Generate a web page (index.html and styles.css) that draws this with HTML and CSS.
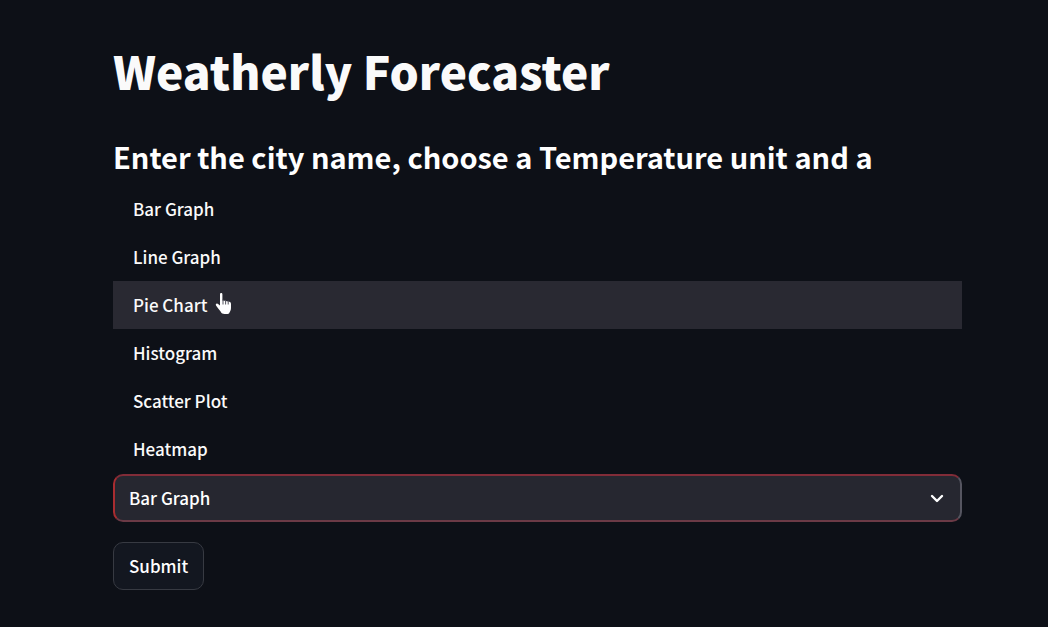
FILE: index.html
```html
<!DOCTYPE html>
<html lang="en">
<head>
    <meta charset="UTF-8">
    <meta name="viewport" content="width=device-width, initial-scale=1.0">
    <title>Weatherly Forecaster</title>
    <link rel="stylesheet" href="styles.css">
</head>
<body>
    <main class="app">
        <h1 class="page-title">Weatherly Forecaster</h1>
        <h2 class="subtitle" id="graph-label">Enter the city name, choose a Temperature unit and a</h2>
        <form class="forecast-form">
            <ul class="options" role="listbox" aria-labelledby="graph-label">
                <li class="option" role="option" aria-selected="true">Bar Graph</li>
                <li class="option" role="option">Line Graph</li>
                <li class="option active" role="option">
                    Pie Chart
                    <svg class="pointer" viewBox="0 0 18 24" aria-hidden="true">
                        <path d="M5 2.5C5 .6 7.4.6 7.4 2.5V8.4L9.6 8.8L12 9.3L14.2 9.8C15.5 10.2 16 10.8 16 12V16C16 18.6 14.8 19.6 14 21.5C12.5 22.4 8 22.4 6.5 21C5.4 18.6 2.8 16 1 13.4C.2 11.8 2 11 3.4 12.2L5 13.6Z"/>
                        <path class="pointer-lines" d="M8 7.5V12.5M10.6 8V12.5M13.2 8.5V12.5"/>
                    </svg>
                </li>
                <li class="option" role="option">Histogram</li>
                <li class="option" role="option">Scatter Plot</li>
                <li class="option" role="option">Heatmap</li>
            </ul>
            <div class="select-box">
                <select class="graph-select" aria-labelledby="graph-label">
                    <option>Bar Graph</option>
                    <option>Line Graph</option>
                    <option>Pie Chart</option>
                    <option>Histogram</option>
                    <option>Scatter Plot</option>
                    <option>Heatmap</option>
                </select>
                <svg class="chevron" viewBox="0 0 14 10" aria-hidden="true">
                    <path d="M2 2L7 7L12 2"/>
                </svg>
            </div>
            <button class="submit-btn" type="button">Submit</button>
        </form>
    </main>
</body>
</html>
```
FILE: styles.css
```css
* {
    box-sizing: border-box;
}
body {
    margin: 0;
    background-color: #0d1017;
    color: #fafafa;
    font-family: "Noto Sans CJK SC", "Noto Sans", sans-serif;
    font-size: 17px;
    font-weight: 500;
}
.app {
    padding: 34px 86px 36px 113px;
}
.page-title {
    margin: 0;
    font-size: 46px;
    font-weight: 900;
    line-height: 72px;
}
.subtitle {
    margin: 28px 0 6px;
    font-size: 29px;
    font-weight: 700;
    line-height: 45px;
    color: #fff;
}
.options {
    margin: 0 0 1px;
    padding: 0;
    list-style: none;
}
.option {
    display: flex;
    align-items: center;
    gap: 8px;
    height: 48px;
    padding: 0 20px 2px;
    cursor: pointer;
}
.option.active {
    background-color: #292932;
}
.pointer {
    width: 18px;
    height: 24px;
    fill: #fff;
}
.pointer-lines {
    fill: none;
    stroke: #55555e;
    stroke-width: 1;
}
.select-box {
    position: relative;
}
.graph-select {
    display: block;
    width: 100%;
    height: 48px;
    padding: 0 48px 2px 14px;
    appearance: none;
    background-color: #262730;
    border: 2px solid;
    border-color: #812c38 #555560 #6b3a46 #a82c30;
    border-radius: 10px;
    color: #fff;
    font: inherit;
    cursor: pointer;
}
.chevron {
    position: absolute;
    top: 20px;
    right: 18px;
    width: 14px;
    height: 10px;
    fill: none;
    stroke: #fff;
    stroke-width: 2.4;
    stroke-linecap: round;
    stroke-linejoin: round;
    pointer-events: none;
}
.submit-btn {
    height: 48px;
    margin-top: 20px;
    padding: 0 15px 2px;
    background-color: #131720;
    border: 1px solid #373a42;
    border-radius: 10px;
    color: #fff;
    font: inherit;
    cursor: pointer;
}
```
